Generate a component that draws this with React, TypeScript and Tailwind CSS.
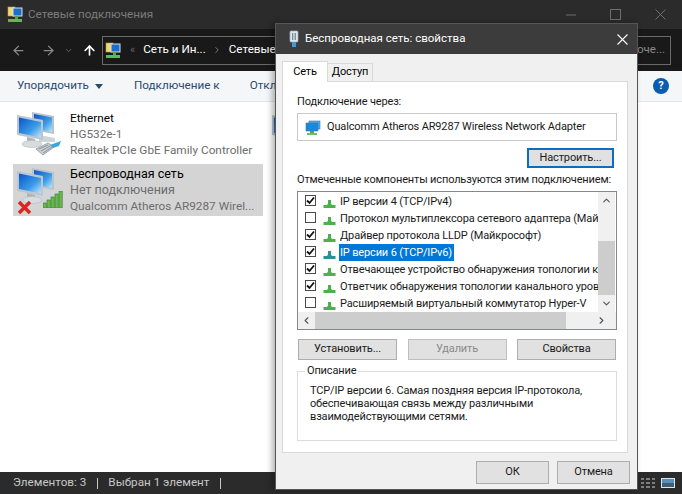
import { ChevronDown, ChevronLeft, ChevronRight, ChevronUp, ArrowLeft, ArrowRight, ArrowUp } from "lucide-react";

const components = [
  { name: "IP версии 4 (TCP/IPv4)", checked: true },
  { name: "Протокол мультиплексора сетевого адаптера (Майкрософт)", checked: false },
  { name: "Драйвер протокола LLDP (Майкрософт)", checked: true },
  { name: "IP версии 6 (TCP/IPv6)", checked: true, selected: true },
  { name: "Отвечающее устройство обнаружения топологии канального уровня", checked: true },
  { name: "Ответчик обнаружения топологии канального уровня", checked: true },
  { name: "Расширяемый виртуальный коммутатор Hyper-V", checked: false },
];

function Monitors({ id }: { id: string }) {
  return (
    <svg width="50" height="46" viewBox="0 0 50 46" className="shrink-0">
      <defs>
        <linearGradient id={id} x1="0" y1="0" x2="1" y2="1">
          <stop offset="0" stopColor="#0b55c8" />
          <stop offset="0.6" stopColor="#3b9be8" />
          <stop offset="1" stopColor="#bfe6fa" />
        </linearGradient>
      </defs>
      <path d="M17 2 L39 6 L39 24 L17 20 Z" fill="#b9c3cc" />
      <path d="M19 4 L37 7.5 L37 22 L19 18.5 Z" fill={`url(#${id})`} />
      <path d="M24 25 L40 28 L40 32 L24 32 Z" fill="#d0d5d9" />
      <path d="M2 5 L28 10 L28 30 L2 25 Z" fill="#bcc6cf" />
      <path d="M4 7.5 L26 12 L26 27.5 L4 23 Z" fill={`url(#${id})`} />
      <path d="M12 27 L20 29 L20 32 L12 31 Z" fill="#aeb4ba" />
      <ellipse cx="17" cy="34" rx="10" ry="3.5" fill="#d9dcdf" stroke="#b6bbc0" strokeWidth="0.6" />
    </svg>
  );
}

function PlugIcon() {
  return (
    <svg width="27" height="16" viewBox="0 0 27 16" className="absolute left-[22px] top-[30px]">
      <path d="M1 9 L13 3 L19 7 L8 15 Z" fill="#c9ced3" stroke="#8b9299" strokeWidth="0.8" />
      <path d="M4 9 L13 5 M6 11 L15 6 M8 13 L17 7" stroke="#7d858c" strokeWidth="0.8" />
      <path d="M15 5 L26 1 L24 6 L18 8 Z" fill="#3fa7d6" />
    </svg>
  );
}

function SignalIcon() {
  return (
    <svg width="21" height="17" viewBox="0 0 21 17" className="absolute left-[30px] top-[27px]">
      {[0, 4, 8, 12, 16].map((x, i) => (
        <rect key={x} x={x} y={12 - i * 3} width="3.2" height={5 + i * 3} fill="#6cb84f" stroke="#2c7a2c" strokeWidth="0.6" />
      ))}
    </svg>
  );
}

function RedCross() {
  return (
    <svg width="15" height="15" viewBox="0 0 15 15" className="absolute left-[4px] top-[36px]">
      <path d="M2 2 L13 13 M13 2 L2 13" stroke="#d9241f" strokeWidth="3.4" />
    </svg>
  );
}

function FolderNet() {
  return (
    <svg width="16" height="17" viewBox="0 0 16 17" className="shrink-0">
      <rect x="1" y="1" width="7" height="9" fill="#f0d878" stroke="#b8a040" strokeWidth="0.6" />
      <rect x="6" y="2" width="9" height="8" fill="#1c6fc9" stroke="#d8e0e8" strokeWidth="1" />
      <rect x="8" y="10" width="3" height="3" fill="#4fa64f" />
      <rect x="1" y="13" width="14" height="3" fill="#5fb85f" />
    </svg>
  );
}

function TreeIcon({ teal }: { teal?: boolean }) {
  const c = teal ? "#2f8f96" : "#4cb04c";
  return (
    <svg width="13" height="8" viewBox="0 0 13 8" className="mt-[5px] shrink-0">
      <path d="M5 0 H8 V3.5 L9 5 H12.5 V8 H0.5 V5 H4 L5 3.5 Z" fill={c} />
    </svg>
  );
}

function WinButton({ label, className }: { label: string; className: string }) {
  return (
    <div className={`flex h-[21px] items-center justify-center border border-[#adadad] bg-[#e1e1e1] text-[#1a1a1a] ${className}`}>
      {label}
    </div>
  );
}

function Dialog() {
  return (
    <div className="absolute left-[275px] top-[23px] flex h-[467px] w-[363px] flex-col border border-[#555] bg-[#f0f0f0] text-[11px] tracking-[-0.15px] shadow-[-3px_0_6px_rgba(0,0,0,0.3)]">
      <div className="flex h-[30px] shrink-0 items-center bg-[#3c3c3c] pl-[12px] pr-[9px]">
        <svg width="12" height="18" viewBox="0 0 12 18" className="shrink-0">
          <rect x="2" y="1" width="8" height="11" rx="1" fill="#dfe6ec" stroke="#9fb0bd" strokeWidth="0.7" />
          <rect x="4" y="3" width="1.3" height="7" fill="#7b8894" />
          <rect x="6.6" y="3" width="1.3" height="7" fill="#7b8894" />
          <rect x="4" y="12" width="4" height="5" fill="#3e9bd8" />
        </svg>
        <span className="ml-[5px] text-[11.5px] tracking-normal text-white">Беспроводная сеть: свойства</span>
        <svg width="11" height="11" viewBox="0 0 11 11" className="ml-auto">
          <path d="M0.5 0.5 L10.5 10.5 M10.5 0.5 L0.5 10.5" stroke="#fff" strokeWidth="1.1" />
        </svg>
      </div>

      <div className="flex h-[27px] shrink-0 items-end pl-[6px]">
        <div className="z-10 -mb-px flex h-[21px] w-[46px] items-center justify-center border border-b-0 border-[#d9d9d9] bg-white text-black">
          Сеть
        </div>
        <div className="flex h-[18px] w-[45px] items-center justify-center border border-b-0 border-l-0 border-[#d9d9d9] bg-[#f0f0f0] text-black">
          Доступ
        </div>
      </div>

      <div className="ml-[6px] flex h-[372px] w-[346px] shrink-0 flex-col border border-[#d9d9d9] bg-white pl-[14px] pr-[10px] text-[#1a1a1a]">
        <div className="mt-[11px] h-[17px] leading-[17px]">Подключение через:</div>
        <div className="mt-[3px] flex h-[28px] w-[320px] shrink-0 items-center border border-[#c8c8c8] pl-[7px]">
          <svg width="16" height="15" viewBox="0 0 16 15" className="shrink-0">
            <rect x="4" y="1" width="11" height="8" fill="#5aa8e0" stroke="#3a7cb0" strokeWidth="0.6" />
            <rect x="1" y="3" width="12" height="8" fill="#1c88d8" stroke="#3a7cb0" strokeWidth="0.6" />
            <rect x="5" y="11" width="4" height="2" fill="#4fa64f" />
            <rect x="2" y="13" width="10" height="2" fill="#6cc06c" />
          </svg>
          <span className="ml-[6px] whitespace-nowrap">Qualcomm Atheros AR9287 Wireless Network Adapter</span>
        </div>
        <div className="mt-[7px] flex w-[317px] justify-end">
          <div className="flex h-[20px] w-[87px] items-center justify-center border-2 border-[#0a6fc2] bg-[#e1e1e1]">Настроить...</div>
        </div>
        <div className="mt-[3px] h-[17px] whitespace-nowrap leading-[17px]">Отмеченные компоненты используются этим подключением:</div>

        <div className="mt-[3px] flex h-[139px] w-[320px] shrink-0 flex-col border border-[#828790]">
          <div className="flex min-h-0 flex-1">
            <div className="w-[300px] overflow-hidden pl-[7px] pt-[1px]">
              {components.map((item) => (
                <div key={item.name} className="flex h-[17px] items-center whitespace-nowrap">
                  <span className="-mt-[3px] flex h-[11px] w-[11px] shrink-0 items-center justify-center border border-[#4a4a4a] bg-white">
                    {item.checked && (
                      <svg width="9" height="9" viewBox="0 0 9 9">
                        <path d="M1 4.5 L3.5 7 L8 1.5" fill="none" stroke="#111" strokeWidth="1.8" />
                      </svg>
                    )}
                  </span>
                  <span className="ml-[7px] flex">
                    <TreeIcon teal={item.selected} />
                  </span>
                  <span className={`ml-[3px] px-[1px] leading-[17px] ${item.selected ? "bg-[#0078d7] pr-[2px] text-white" : ""}`}>{item.name}</span>
                </div>
              ))}
            </div>
            <div className="flex w-[17px] shrink-0 flex-col bg-[#f0f0f0]">
              <div className="flex h-[17px] items-center justify-center">
                <ChevronUp size={11} strokeWidth={2.5} className="text-[#555]" />
              </div>
              <div className="mt-[32px] h-[55px] bg-[#cdcdcd]" />
              <div className="mt-auto flex h-[17px] items-center justify-center">
                <ChevronDown size={11} strokeWidth={2.5} className="text-[#555]" />
              </div>
            </div>
          </div>
          <div className="flex h-[17px] shrink-0 items-center bg-[#f0f0f0]">
            <div className="flex w-[17px] justify-center">
              <ChevronLeft size={11} strokeWidth={2.5} className="text-[#555]" />
            </div>
            <div className="h-full w-[251px] bg-[#cdcdcd]" />
            <div className="ml-auto flex w-[34px] justify-start pl-[14px]">
              <ChevronRight size={11} strokeWidth={2.5} className="text-[#555]" />
            </div>
          </div>
        </div>

        <div className="ml-px mt-[9px] flex w-[318px] justify-between">
          <WinButton label="Установить..." className="w-[99px]" />
          <WinButton label="Удалить" className="w-[99px] border-[#bfbfbf] bg-[#cccccc] !text-[#8a8a8a]" />
          <WinButton label="Свойства" className="w-[99px]" />
        </div>

        <div className="relative mt-[11px] h-[70px] w-[320px] shrink-0 border border-[#dcdcdc] pl-[12px] pt-[12px] leading-[13px]">
          <span className="absolute -top-[8px] left-[7px] bg-white px-[2px] leading-[14px]">Описание</span>
          <div className="whitespace-nowrap">
            TCP/IP версии 6. Самая поздняя версия IP-протокола,
            <br />
            обеспечивающая связь между различными
            <br />
            взаимодействующими сетями.
          </div>
        </div>
      </div>

      <div className="mt-[8px] flex justify-end gap-[8px] pr-[7px]">
        <WinButton label="ОК" className="!h-[23px] w-[73px]" />
        <WinButton label="Отмена" className="!h-[23px] w-[73px]" />
      </div>
    </div>
  );
}

export default function App() {
  return (
    <div className="relative flex h-[494px] w-[682px] flex-col overflow-hidden bg-white font-['Roboto',sans-serif]">
      <div className="flex h-[29px] shrink-0 items-center bg-[#2b2b2b] pl-[7px] pr-[16px]">
        <FolderNet />
        <span className="ml-[5px] text-[11.7px] text-[#7b7b7b]">Сетевые подключения</span>
        <div className="ml-auto flex items-center gap-[34px]">
          <svg width="10" height="2" viewBox="0 0 10 2">
            <path d="M0 1 H10" stroke="#6e6e6e" />
          </svg>
          <svg width="11" height="11" viewBox="0 0 11 11">
            <rect x="0.5" y="0.5" width="10" height="10" fill="none" stroke="#6e6e6e" />
          </svg>
          <svg width="11" height="11" viewBox="0 0 11 11">
            <path d="M0.5 0.5 L10.5 10.5 M10.5 0.5 L0.5 10.5" stroke="#6e6e6e" />
          </svg>
        </div>
      </div>

      <div className="flex h-[42px] shrink-0 items-center bg-[#191919] pl-[11px] pr-[11px]">
        <ArrowLeft size={15} strokeWidth={2} className="text-[#8a8a8a]" />
        <ArrowRight size={15} strokeWidth={2} className="ml-[15px] text-[#8a8a8a]" />
        <ChevronDown size={9} strokeWidth={2.5} className="ml-[8px] text-[#6a6a6a]" />
        <ArrowUp size={15} strokeWidth={2.6} className="ml-[9px] text-white" />
        <div className="ml-[5px] flex h-[29px] flex-1 items-center border border-[#6a6a6a] pl-[2px] text-[11.7px] text-white">
          <FolderNet />
          <span className="ml-[9px] text-[11px] text-[#666]">«</span>
          <span className="ml-[8px]">Сеть и Ин...</span>
          <ChevronRight size={10} strokeWidth={2} className="ml-[6px] text-[#8a8a8a]" />
          <span className="ml-[7px]">Сетевые подключения</span>
        </div>
        <div className="ml-[8px] flex h-[29px] w-[100px] items-center justify-end overflow-hidden whitespace-nowrap border border-[#6a6a6a] pr-[5px] text-[11.5px] text-[#8a8a8a]">
          Поиск: Сетевые подключе...
        </div>
      </div>

      <div className="flex h-[31px] shrink-0 items-center border-b border-[#e5e5e5] bg-[#f5f6f7] pl-[17px] pr-[13px] text-[11.7px] text-[#2a4a72]">
        <span>Упорядочить</span>
        <svg width="8" height="5" viewBox="0 0 8 5" className="ml-[6px]">
          <path d="M0 0 H8 L4 5 Z" fill="#2a4a72" />
        </svg>
        <span className="ml-[31px]">Подключение к</span>
        <span className="ml-[30px]">Отключение</span>
        <span className="ml-auto flex h-[16px] w-[16px] items-center justify-center rounded-full bg-[#0a5cb0] text-[11px] font-bold text-white">?</span>
      </div>

      <div className="flex min-h-0 flex-1 flex-col pl-[13px] pt-[8px] text-[11.8px] leading-[16px] text-[#6d6d6d]">
        <div className="flex h-[52px]">
          <div className="flex w-[250px] shrink-0">
            <div className="relative h-[52px] w-[57px] shrink-0 pl-[2px]">
              <Monitors id="screen-a" />
              <PlugIcon />
            </div>
            <div className="whitespace-nowrap">
              <div className="text-black">Ethernet</div>
              <div>HG532e-1</div>
              <div>Realtek PCIe GbE Family Controller</div>
            </div>
          </div>
          <div className="ml-[7px]">
            <Monitors id="screen-c" />
          </div>
        </div>
        <div className="mt-[2px] flex h-[52px] w-[250px] bg-[#d4d4d4]">
          <div className="relative h-[52px] w-[57px] shrink-0 pl-[2px] pt-[2px]">
            <Monitors id="screen-b" />
            <RedCross />
            <SignalIcon />
          </div>
          <div className="whitespace-nowrap pt-[2px]">
            <div className="text-[12.5px] text-black">Беспроводная сеть</div>
            <div className="text-[12.5px]">Нет подключения</div>
            <div>Qualcomm Atheros AR9287 Wirel...</div>
          </div>
        </div>
      </div>

      <div className="flex h-[22px] shrink-0 items-center bg-[#2b2b2b] pl-[13px] pr-[7px] text-[11.7px] text-[#c8c8c8]">
        <span>Элементов: 3</span>
        <span className="ml-[11px] h-[11px] w-px bg-[#c8c8c8]" />
        <span className="ml-[10px]">Выбран 1 элемент</span>
        <span className="ml-[10px] h-[11px] w-px bg-[#c8c8c8]" />
        <svg width="14" height="10" viewBox="0 0 14 10" className="ml-auto">
          <path d="M0 1 H3 M0 5 H3 M0 9 H3 M5 1 H9 M5 5 H9 M5 9 H9 M11 1 H14 M11 5 H14 M11 9 H14" stroke="#9a9a9a" strokeWidth="1.4" />
        </svg>
        <svg width="14" height="10" viewBox="0 0 14 10" className="ml-[6px]">
          <rect width="14" height="10" fill="#dce6ee" />
          <rect x="1" y="1" width="12" height="4" fill="#5a8fb8" />
          <rect x="1" y="5" width="12" height="4" fill="#3c5f78" />
        </svg>
      </div>

      <Dialog />
    </div>
  );
}
